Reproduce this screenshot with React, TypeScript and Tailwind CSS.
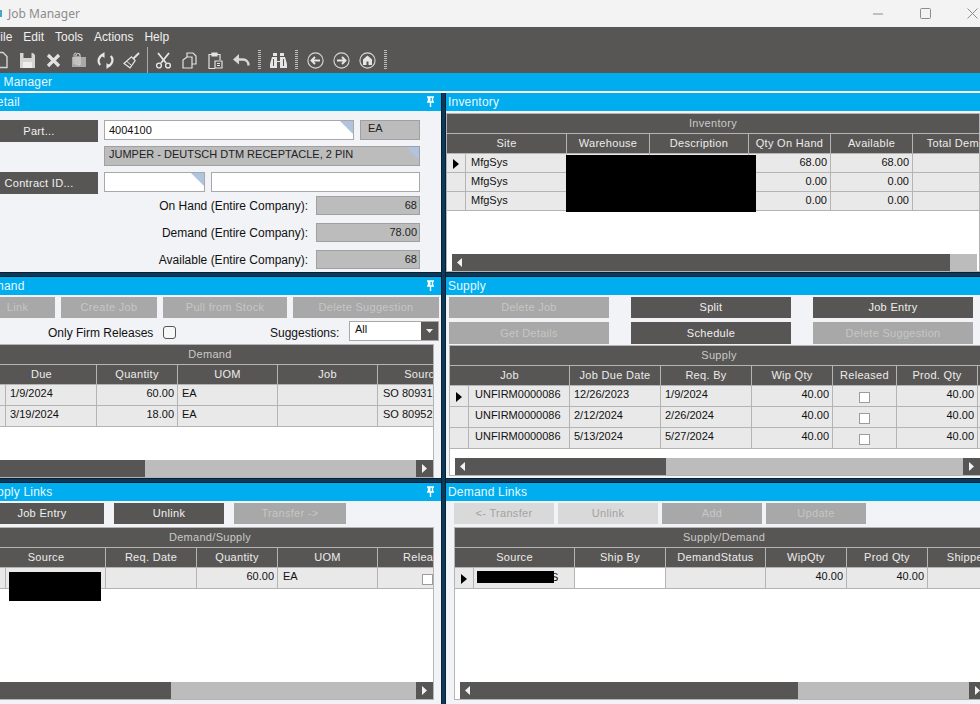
import type { ReactNode } from 'react'

const font = "font-['Liberation_Sans',Arial,sans-serif]"

type Col = { label: string; w: number; align?: 'right' | 'center'; pl?: number }
type Cell = string | { check: true } | { white: true; text?: string }

function Triangle() {
  return <span className="absolute right-0 top-0 h-[13px] w-[13px] bg-[#b0c4de] [clip-path:polygon(0_0,100%_0,100%_100%)]" />
}

function Pin() {
  return (
    <svg width="9" height="11" viewBox="0 0 9 11" className="absolute right-[6px] top-[3px]" fill="none">
      <path d="M1 1h7M2.5 1v5M6.5 1v5M1 6h7M4.5 6v5" stroke="#fff" strokeWidth="1.4" />
      <path d="M3 1h1.5v5H3z" fill="#fff" />
    </svg>
  )
}

function Pane({ title, pin, shift, children }: { title: string; pin?: boolean; shift?: string; children: ReactNode }) {
  return (
    <div className="flex min-h-0 flex-1 flex-col overflow-hidden bg-[#f2f3f6]">
      <div className="relative h-[18px] shrink-0 overflow-hidden bg-[#00adef] text-[12px] leading-[18px] tracking-[0.2px] text-[#e9f8ff]">
        <span className={`block whitespace-nowrap ${shift ?? 'pl-[2px]'}`}>{title}</span>
        {pin && <Pin />}
      </div>
      {children}
    </div>
  )
}

function Btn({ label, w, h = 'h-[21px]', kind = 'dark' }: { label: string; w: string; h?: string; kind?: 'dark' | 'off' | 'pale' }) {
  const tone =
    kind === 'dark'
      ? 'bg-[#585654] text-[#f0f0f0]'
      : kind === 'off'
        ? 'bg-[#a8a8a8] text-[#c6c6c6]'
        : 'bg-[#d9d9d9] text-[#a2a2a2]'
  return (
    <div className={`flex shrink-0 items-center justify-center text-[11px] tracking-[0.3px] ${w} ${h} ${tone}`}>{label}</div>
  )
}

function Arrow({ dir }: { dir: 'left' | 'right' }) {
  return (
    <svg width="5" height="9" viewBox="0 0 5 9" className="shrink-0">
      <path d={dir === 'left' ? 'M5 0v9L0 4.5z' : 'M0 0v9l5-4.5z'} fill="#f2f2f2" />
    </svg>
  )
}

function Scrollbar({ sliver, thumb, track, button = true }: { sliver?: boolean; thumb: string; track: string; button?: boolean }) {
  return (
    <div className="flex h-[17px] shrink-0 bg-white">
      {sliver && <div className="w-[5px] shrink-0 bg-white" />}
      <div className={`flex shrink-0 items-center bg-[#585654] pl-[5px] ${thumb}`}>
        <Arrow dir="left" />
      </div>
      <div className={`shrink-0 bg-[#bcbcbc] ${track}`} />
      {button && (
        <div className="flex w-[17px] shrink-0 items-center justify-center bg-[#585654]">
          <Arrow dir="right" />
        </div>
      )}
    </div>
  )
}

function DataGrid({
  title,
  cols,
  marker,
  rows,
  rowH,
  active = true,
  scroll,
  frame,
  children,
}: {
  title: string
  cols: Col[]
  marker: number
  rows: Cell[][]
  rowH: number
  active?: boolean
  scroll: ReactNode
  frame: string
  children?: ReactNode
}) {
  return (
    <div className={`relative flex shrink-0 flex-col overflow-hidden border border-[#b4b4b4] bg-white ${frame}`}>
      <div className={`h-[20px] shrink-0 overflow-hidden border-b border-[#b4b4b4] bg-[#585654] text-center text-[11px] leading-[19px] tracking-[0.3px] text-[#c9c9c9]`}>
        {title}
      </div>
      <div className="flex h-[20px] shrink-0 border-b border-[#b4b4b4] bg-[#585654]">
        {cols.map((c, i) => (
          <div
            key={c.label}
            className="shrink-0 overflow-hidden whitespace-nowrap border-r border-[#b4b4b4] text-center text-[11px] leading-[19px] tracking-[0.3px] text-[#ececec]"
            style={{ width: i === 0 ? c.w + marker : c.w }}
          >
            {c.label}
          </div>
        ))}
      </div>
      {rows.map((row, r) => (
        <div key={r} className="flex shrink-0 border-b border-[#b4b4b4] bg-[#e9e9e9] text-[#111]" style={{ height: rowH }}>
          <div className="flex shrink-0 items-center justify-center border-r border-[#b4b4b4]" style={{ width: marker }}>
            {active && r === 0 && (
              <svg width="6" height="10" viewBox="0 0 6 10" className="mt-[2px]">
                <path d="M0 0v10l6-5z" fill="#000" />
              </svg>
            )}
          </div>
          {row.map((cell, i) => {
            const col = cols[i]
            const w = col.w
            if (typeof cell === 'object' && 'check' in cell) {
              return (
                <div key={i} className="flex shrink-0 items-center justify-center border-r border-[#b4b4b4] pt-[2px]" style={{ width: w }}>
                  <span className="h-[11px] w-[11px] border border-[#9c9c9c] bg-white" />
                </div>
              )
            }
            if (typeof cell === 'object') {
              return <div key={i} className="shrink-0 border-r border-[#b4b4b4] bg-white" style={{ width: w }} />
            }
            return (
              <div
                key={i}
                className={`shrink-0 overflow-hidden whitespace-nowrap border-r border-[#b4b4b4] pt-[1px] text-[11px] leading-[15px] ${col.align === 'right' ? 'pr-[3px] text-right' : ''}`}
                style={{ width: w, paddingLeft: col.align === 'right' ? 0 : col.pl ?? 4 }}
              >
                {cell}
              </div>
            )
          })}
        </div>
      ))}
      <div className="min-h-0 flex-1 bg-white" />
      {scroll}
      {children}
    </div>
  )
}

function Grip() {
  return <div className="mx-auto h-[20px] w-[3px] bg-[repeating-linear-gradient(to_bottom,#bdbdbd_0,#bdbdbd_1px,transparent_1px,transparent_2px)]" />
}

function Tool({ children }: { children: ReactNode }) {
  return <div className="flex h-[26px] w-[26px] shrink-0 items-center justify-center">{children}</div>
}

function Toolbar() {
  const c = '#d4d4d4'
  return (
    <div className="-ml-[12px] flex h-[26px] shrink-0 items-center bg-[#585654]">
      <Tool>
        <svg width="18" height="18" viewBox="0 0 18 18" fill="none">
          <path d="M3 1.5h8l4 4v11H3z" stroke={c} strokeWidth="1.4" />
        </svg>
      </Tool>
      <Tool>
        <svg width="17" height="17" viewBox="0 0 17 17">
          <path d="M1 1h13l2 2v13H1z" fill={c} />
          <path d="M4.5 1h8v5h-8z" fill="#585654" />
          <path d="M4 10h9v6H4z" fill="#eee" />
        </svg>
      </Tool>
      <Tool>
        <svg width="15" height="15" viewBox="0 0 15 15" fill="none">
          <path d="M2 2l11 11M13 2L2 13" stroke="#e2e2e2" strokeWidth="3.2" />
        </svg>
      </Tool>
      <Tool>
        <svg width="16" height="16" viewBox="0 0 16 16" fill="none">
          <path d="M1 5h14v10H1z" fill="#a8a8a8" />
          <path d="M5 13V3.5a2 2 0 0 1 4 0V12a1 1 0 0 1-2 0V4" stroke={c} strokeWidth="1.2" />
          <path d="M3 12V2.5a2 2 0 0 1 2-1.5" stroke={c} strokeWidth="1" />
        </svg>
      </Tool>
      <Tool>
        <svg width="17" height="17" viewBox="0 0 17 17" fill="none">
          <path d="M7 2.6A6.3 6.3 0 0 0 3.2 13" stroke="#e6e6e6" strokeWidth="2.2" />
          <path d="M10 14.4A6.3 6.3 0 0 0 13.8 4" stroke="#e6e6e6" strokeWidth="2.2" />
          <path d="M7.5 0v6L3.5 3zM9.5 17v-6l4 3z" fill="#e6e6e6" />
        </svg>
      </Tool>
      <Tool>
        <svg width="17" height="17" viewBox="0 0 17 17" fill="none">
          <path d="M10.5 6.5L16 1" stroke="#e6e6e6" strokeWidth="1.8" />
          <path d="M8.5 4.8l3.7 3.7L7 15.8 1 11.5z" stroke="#e6e6e6" strokeWidth="1.2" />
          <path d="M4 9.5l4 3.5" stroke="#e6e6e6" strokeWidth="1" />
        </svg>
      </Tool>
      <div className="flex h-[26px] w-[6px] shrink-0 justify-center">
        <div className="h-[26px] w-px bg-[#a8a8a8]" />
      </div>
      <Tool>
        <svg width="17" height="17" viewBox="0 0 17 17" fill="none">
          <path d="M3 1l8 10M14 1L6 11" stroke="#e6e6e6" strokeWidth="1.8" />
          <circle cx="4" cy="13.5" r="2.4" stroke="#e6e6e6" strokeWidth="1.4" />
          <circle cx="13" cy="13.5" r="2.4" stroke="#e6e6e6" strokeWidth="1.4" />
        </svg>
      </Tool>
      <Tool>
        <svg width="15" height="17" viewBox="0 0 15 17" fill="none" stroke="#e2e2e2" strokeWidth="1.2">
          <path d="M5 5V1h6l3 3v8h-4" />
          <path d="M1 8l4-3h5v11H1z" />
        </svg>
      </Tool>
      <Tool>
        <svg width="15" height="17" viewBox="0 0 15 17" fill="none" stroke="#e2e2e2" strokeWidth="1.2">
          <path d="M4 2.5H1v14h6" />
          <path d="M9 2.5h3V8" />
          <path d="M4 1h5v3H4z" fill="#e2e2e2" />
          <path d="M7 9h7v7H7z" />
          <path d="M9 11.5h3M9 13.5h3" />
        </svg>
      </Tool>
      <Tool>
        <svg width="17" height="13" viewBox="0 0 17 13" fill="none">
          <path d="M4 5.5h6a5.5 5.5 0 0 1 5.5 6" stroke="#d8d8d8" strokeWidth="2.4" />
          <path d="M6 0v10.5L0 5.5z" fill="#d8d8d8" />
        </svg>
      </Tool>
      <div className="w-[10px] shrink-0">
        <Grip />
      </div>
      <div className="w-px shrink-0" />
      <Tool>
        <svg width="17" height="15" viewBox="0 0 17 15">
          <path d="M3 0h4v3H3zM10 0h4v3h-4z" fill="#e6e6e6" />
          <path d="M2 4h5v4h3V4h5l2 7v4h-7V9H7v6H0v-4z" fill="#e6e6e6" />
          <path d="M3.5 6v7M13.5 6v7" stroke="#585654" strokeWidth="1" />
        </svg>
      </Tool>
      <div className="w-[10px] shrink-0">
        <Grip />
      </div>
      <div className="w-px shrink-0" />
      <Tool>
        <svg width="17" height="17" viewBox="0 0 17 17" fill="none">
          <circle cx="8.5" cy="8.5" r="7.6" stroke="#d8d8d8" strokeWidth="1.1" />
          <path d="M13 8.5H5M8 5L4.5 8.5 8 12" stroke="#e6e6e6" strokeWidth="1.9" />
        </svg>
      </Tool>
      <Tool>
        <svg width="17" height="17" viewBox="0 0 17 17" fill="none">
          <circle cx="8.5" cy="8.5" r="7.6" stroke="#d8d8d8" strokeWidth="1.1" />
          <path d="M4 8.5h8M9 5l3.5 3.5L9 12" stroke="#e6e6e6" strokeWidth="1.9" />
        </svg>
      </Tool>
      <Tool>
        <svg width="17" height="17" viewBox="0 0 17 17" fill="none">
          <circle cx="8.5" cy="8.5" r="7.6" stroke="#d8d8d8" strokeWidth="1.1" />
          <path d="M8.5 3.5L13 7.5v5.5H4V7.5z" fill="#e6e6e6" />
          <path d="M7.5 9.5h2V13h-2z" fill="#585654" />
        </svg>
      </Tool>
      <div className="w-[10px] shrink-0">
        <Grip />
      </div>
    </div>
  )
}

function Stat({ label, value }: { label: string; value: string }) {
  return (
    <div className="flex h-[19px] items-center">
      <div className="w-[308px] shrink-0 text-right text-[12px] text-[#111]">{label}</div>
      <div className="ml-[8px] h-[19px] w-[104px] shrink-0 border border-[#a0a0a0] bg-[#bcbcbc] pr-[2px] text-right text-[11px] leading-[16px] text-[#222]">
        {value}
      </div>
    </div>
  )
}

function DetailPanel() {
  return (
    <div className="flex flex-col pt-[9px]">
      <div className="flex">
        <div className="-ml-[20px]">
          <Btn label="Part..." w="w-[118px]" h="h-[22px]" />
        </div>
        <div className="relative ml-[6px] h-[20px] w-[250px] border border-[#a8a8a8] bg-white pl-[4px] text-[11px] leading-[18px] text-[#111]">
          4004100
          <Triangle />
        </div>
        <div className="ml-[6px] h-[20px] w-[60px] border border-[#a0a0a0] bg-[#bcbcbc] pl-[7px] text-[11px] leading-[15px] text-[#222]">EA</div>
      </div>
      <div className="relative ml-[104px] mt-[4px] h-[20px] w-[316px] border border-[#a0a0a0] bg-[#bcbcbc] pl-[4px] text-[11px] leading-[15px] text-[#222]">
        JUMPER - DEUTSCH DTM RECEPTACLE, 2 PIN
        <Triangle />
      </div>
      <div className="mt-[6px] flex">
        <div className="-ml-[20px]">
          <Btn label="Contract ID..." w="w-[118px]" h="h-[22px]" />
        </div>
        <div className="relative ml-[6px] h-[20px] w-[101px] border border-[#a8a8a8] bg-white">
          <Triangle />
        </div>
        <div className="ml-[6px] h-[20px] w-[209px] border border-[#a8a8a8] bg-white" />
      </div>
      <div className="mt-[2px] flex flex-col gap-[8px]">
        <Stat label="On Hand (Entire Company):" value="68" />
        <Stat label="Demand (Entire Company):" value="78.00" />
        <Stat label="Available (Entire Company):" value="68" />
      </div>
    </div>
  )
}

function DemandPanel() {
  return (
    <>
      <div className="-ml-[20px] mt-[2px] flex gap-[6px]">
        <Btn label="Link" w="w-[75px]" kind="off" />
        <Btn label="Create Job" w="w-[96px]" kind="off" />
        <Btn label="Pull from Stock" w="w-[124px]" kind="off" />
        <Btn label="Delete Suggestion" w="w-[146px]" kind="off" />
      </div>
      <div className="mt-[3px] flex h-[24px] items-start">
        <span className="ml-[48px] mt-[4px] w-[107px] whitespace-nowrap text-[12px] leading-[16px] text-[#111]">Only Firm Releases</span>
        <span className="ml-[8px] mt-[5px] h-[13px] w-[13px] rounded-[3px] border border-[#555] bg-[#f7f7f7]" />
        <span className="ml-[94px] mt-[4px] w-[79px] whitespace-nowrap text-[12px] leading-[16px] text-[#111]">Suggestions:</span>
        <div className="flex h-[20px] w-[90px] border border-[#a8a8a8] bg-white text-[11px] leading-[15px] text-[#111]">
          <span className="flex-1 pl-[5px]">All</span>
          <span className="flex w-[17px] items-center justify-center bg-[#585654]">
            <svg width="7" height="4" viewBox="0 0 7 4">
              <path d="M0 0h7L3.5 4z" fill="#eee" />
            </svg>
          </span>
        </div>
      </div>
      <div className="-ml-[14px]">
        <DataGrid
          frame="h-[134px] w-[448px]"
          title="Demand"
          marker={19}
          rowH={21}
          active={false}
          cols={[
            { label: 'Due', w: 91 },
            { label: 'Quantity', w: 81, align: 'right' },
            { label: 'UOM', w: 100 },
            { label: 'Job', w: 100 },
            { label: 'Source', w: 90, pl: 5 },
          ]}
          rows={[
            ['1/9/2024', '60.00', 'EA', '', 'SO 80931'],
            ['3/19/2024', '18.00', 'EA', '', 'SO 80952'],
          ]}
          scroll={<Scrollbar thumb="w-[158px]" track="w-[271px]" />}
        />
      </div>
    </>
  )
}

function SupplyLinksPanel() {
  return (
    <>
      <div className="-ml-[20px] mt-[2px] flex">
        <Btn label="Job Entry" w="w-[124px]" />
        <div className="ml-[10px]">
          <Btn label="Unlink" w="w-[110px]" />
        </div>
        <div className="ml-[10px]">
          <Btn label="Transfer ->" w="w-[112px]" kind="off" />
        </div>
      </div>
      <div className="-ml-[14px] mt-[3px]">
        <DataGrid
          frame="h-[173px] w-[448px]"
          title="Demand/Supply"
          marker={19}
          rowH={21}
          active={false}
          cols={[
            { label: 'Source', w: 100 },
            { label: 'Req. Date', w: 91 },
            { label: 'Quantity', w: 81, align: 'right' },
            { label: 'UOM', w: 100, pl: 5 },
            { label: 'Released', w: 100 },
          ]}
          rows={[['', '', '60.00', 'EA', { check: true }]]}
          scroll={<Scrollbar thumb="w-[184px]" track="w-[245px]" />}
        >
          <div className="absolute left-[22px] top-[44px] h-[29px] w-[92px] bg-black" />
        </DataGrid>
      </div>
    </>
  )
}

function InventoryPanel() {
  return (
    <div className="mt-[2px]">
      <DataGrid
        frame="h-[159px] w-[534px]"
        title="Inventory"
        marker={19}
        rowH={19}
        active
        cols={[
          { label: 'Site', w: 101, pl: 5 },
          { label: 'Warehouse', w: 83 },
          { label: 'Description', w: 99 },
          { label: 'Qty On Hand', w: 82, align: 'right' },
          { label: 'Available', w: 82, align: 'right' },
          { label: 'Total Demand', w: 100, align: 'right' },
        ]}
        rows={[
          ['MfgSys', '', '', '68.00', '68.00', ''],
          ['MfgSys', '', '', '0.00', '0.00', ''],
          ['MfgSys', '', '', '0.00', '0.00', ''],
        ]}
        scroll={<Scrollbar sliver thumb="w-[498px]" track="w-[27px]" button={false} />}
      >
        <div className="absolute left-[119px] top-[41px] h-[57px] w-[190px] bg-black" />
      </DataGrid>
    </div>
  )
}

function SupplyPanel() {
  return (
    <div className="flex flex-col pl-[3px]">
      <div className="mt-[2px] flex gap-[22px]">
        <Btn label="Delete Job" w="w-[160px]" kind="off" />
        <Btn label="Split" w="w-[160px]" />
        <Btn label="Job Entry" w="w-[160px]" />
      </div>
      <div className="mt-[4px] flex gap-[22px]">
        <Btn label="Get Details" w="w-[160px]" h="h-[22px]" kind="off" />
        <Btn label="Schedule" w="w-[160px]" h="h-[22px]" />
        <Btn label="Delete Suggestion" w="w-[160px]" h="h-[22px]" kind="off" />
      </div>
      <div className="mt-[1px]">
        <DataGrid
          frame="h-[131px] w-[540px]"
          title="Supply"
          marker={19}
          rowH={21}
          active
          cols={[
            { label: 'Job', w: 101, pl: 6 },
            { label: 'Job Due Date', w: 91 },
            { label: 'Req. By', w: 91 },
            { label: 'Wip Qty', w: 81, align: 'right' },
            { label: 'Released', w: 64 },
            { label: 'Prod. Qty', w: 81, align: 'right' },
          ]}
          rows={[
            ['UNFIRM0000086', '12/26/2023', '1/9/2024', '40.00', { check: true }, '40.00'],
            ['UNFIRM0000086', '2/12/2024', '2/26/2024', '40.00', { check: true }, '40.00'],
            ['UNFIRM0000086', '5/13/2024', '5/27/2024', '40.00', { check: true }, '40.00'],
          ]}
          scroll={<Scrollbar sliver thumb="w-[211px]" track="w-[297px]" />}
        />
      </div>
    </div>
  )
}

function DemandLinksPanel() {
  return (
    <div className="flex flex-col pl-[8px]">
      <div className="mt-[2px] flex gap-[4px]">
        <Btn label="<- Transfer" w="w-[100px]" kind="pale" />
        <Btn label="Unlink" w="w-[100px]" kind="pale" />
        <Btn label="Add" w="w-[100px]" kind="off" />
        <Btn label="Update" w="w-[100px]" kind="off" />
      </div>
      <div className="mt-[3px]">
        <DataGrid
          frame="h-[173px] w-[540px]"
          title="Supply/Demand"
          marker={19}
          rowH={21}
          active
          cols={[
            { label: 'Source', w: 101, pl: 3 },
            { label: 'Ship By', w: 91 },
            { label: 'DemandStatus', w: 100 },
            { label: 'WipQty', w: 81, align: 'right' },
            { label: 'Prod Qty', w: 81, align: 'right' },
            { label: 'Shipped', w: 81, align: 'right' },
          ]}
          rows={[['', { white: true }, '', '40.00', '40.00', '']]}
          scroll={<Scrollbar sliver thumb="w-[338px]" track="w-[171px]" />}
        >
          <span className="absolute left-[96px] top-[42px] text-[11px] leading-[15px] text-[#111]">S</span>
          <div className="absolute left-[22px] top-[43px] h-[12px] w-[77px] bg-black" />
        </DataGrid>
      </div>
    </div>
  )
}

function HSplit() {
  return <div className="h-[5px] shrink-0 border-y border-[#08202f] bg-[#0b3a5c]" />
}

export default function App() {
  return (
    <div className={`flex h-[704px] w-[980px] flex-col overflow-hidden bg-white ${font}`}>
      {/* title bar */}
      <div className="flex h-[27px] shrink-0 items-center bg-[#f3f3f3]">
        <span className="h-[7px] w-[2px] shrink-0 bg-[#3fa9c9]" />
        <span className="ml-[6px] font-['Noto_Sans',sans-serif] text-[12px] text-[#8c8c8c]">Job Manager</span>
        <svg width="12" height="12" viewBox="0 0 12 12" className="ml-auto" fill="none">
          <path d="M1 6h10" stroke="#8c8c8c" />
        </svg>
        <svg width="11" height="11" viewBox="0 0 11 11" className="ml-[36px]" fill="none">
          <rect x="0.5" y="0.5" width="10" height="10" rx="1" stroke="#8c8c8c" />
        </svg>
        <svg width="11" height="11" viewBox="0 0 11 11" className="ml-[36px] mr-[2px]" fill="none">
          <path d="M0.5 0.5l10 10M10.5 0.5l-10 10" stroke="#8c8c8c" />
        </svg>
      </div>

      {/* menu */}
      <div className="-ml-[7px] flex h-[20px] shrink-0 items-center gap-[11px] bg-[#585654] pl-0 text-[12px] text-[#f0f0f0]">
        <span>File</span>
        <span>Edit</span>
        <span>Tools</span>
        <span>Actions</span>
        <span>Help</span>
      </div>

      <Toolbar />

      <div className="-ml-[20px] h-[18px] shrink-0 bg-[#00adef] text-[12px] leading-[18px] tracking-[0.2px] text-[#e9f8ff]">
        <span className="block whitespace-nowrap pl-0">Job Manager</span>
      </div>
      <div className="h-[2px] shrink-0 bg-white" />

      <div className="flex min-h-0 flex-1">
        <div className="flex w-[441px] shrink-0 flex-col">
          <div className="flex h-[179px] shrink-0 flex-col">
            <Pane title="Detail" pin shift="-ml-[12px]">
              <DetailPanel />
            </Pane>
          </div>
          <HSplit />
          <div className="flex h-[201px] shrink-0 flex-col">
            <Pane title="Demand" pin shift="-ml-[22px]">
              <DemandPanel />
            </Pane>
          </div>
          <HSplit />
          <div className="flex h-[221px] shrink-0 flex-col">
            <Pane title="Supply Links" pin shift="-ml-[18px]">
              <SupplyLinksPanel />
            </Pane>
          </div>
        </div>

        <div className="w-[5px] shrink-0 border-x border-[#08202f] bg-[#0b3a5c]" />

        <div className="flex w-[534px] shrink-0 flex-col">
          <div className="flex h-[179px] shrink-0 flex-col">
            <Pane title="Inventory">
              <InventoryPanel />
            </Pane>
          </div>
          <HSplit />
          <div className="flex h-[201px] shrink-0 flex-col">
            <Pane title="Supply">
              <SupplyPanel />
            </Pane>
          </div>
          <HSplit />
          <div className="flex h-[221px] shrink-0 flex-col">
            <Pane title="Demand Links">
              <DemandLinksPanel />
            </Pane>
          </div>
        </div>
      </div>
    </div>
  )
}
